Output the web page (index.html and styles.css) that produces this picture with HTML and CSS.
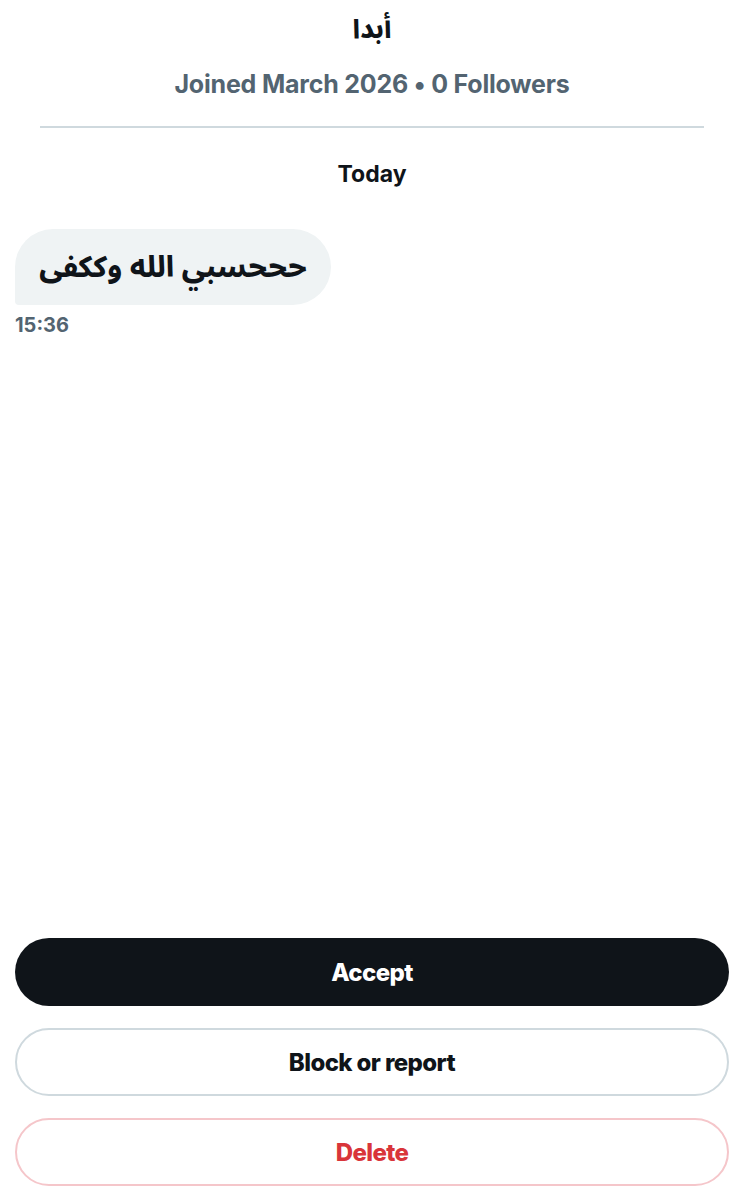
FILE: index.html
```html
<!DOCTYPE html>
<html lang="en">
<head>
<meta charset="utf-8">
<link rel="stylesheet" href="styles.css">
</head>
<body>
<div class="page">
  <header class="profile">
    <div class="name" dir="rtl">أبدا</div>
    <div class="meta">Joined March 2026 • 0 Followers</div>
  </header>
  <hr class="divider">
  <div class="day">Today</div>
  <div class="message">
    <div class="bubble" dir="rtl">حححسبي الله وككفى</div>
    <div class="time">15:36</div>
  </div>
  <div class="spacer"></div>
  <div class="actions">
    <button class="btn btn-accept">Accept</button>
    <button class="btn btn-block">Block or report</button>
    <button class="btn btn-delete">Delete</button>
  </div>
</div>
</body>
</html>
```

FILE: styles.css
```css
* { box-sizing: border-box; }
html, body { margin: 0; padding: 0; background: #fff; }
body {
  font-family: "Inter", "DejaVu Sans", sans-serif;
  color: #0f1419;
}
.page {
  width: 744px;
  height: 1200px;
  display: flex;
  flex-direction: column;
  padding: 0 15px 14px;
}
.profile {
  display: flex;
  flex-direction: column;
  align-items: center;
  padding-top: 12px;
}
.name {
  font-family: "Noto Sans Arabic", "DejaVu Sans", sans-serif;
  font-weight: 800;
  font-size: 26px;
  line-height: 36px;
}
.meta {
  margin-top: 20px;
  font-weight: 700;
  font-size: 25px;
  line-height: 32px;
  color: #536471;
  letter-spacing: -0.2px;
}
.divider {
  border: 0;
  border-top: 2px solid #cfd9de;
  margin: 26px 25px 0;
}
.day {
  text-align: center;
  font-weight: 700;
  font-size: 23px;
  line-height: 30px;
  margin-top: 31px;
}
.message {
  display: flex;
  flex-direction: column;
  align-items: flex-start;
  margin-top: 40px;
}
.bubble {
  background: #eff3f4;
  border-radius: 38px 38px 38px 4px;
  height: 76px;
  width: 316px;
  display: flex;
  align-items: center;
  justify-content: center;
  white-space: nowrap;
  font-family: "Noto Sans Arabic", "DejaVu Sans", sans-serif;
  font-weight: 800;
  font-size: 29px;
}
.time {
  margin-top: 8px;
  font-weight: 700;
  font-size: 20px;
  line-height: 24px;
  color: #536471;
}
.spacer { flex: 1; }
.actions {
  display: flex;
  flex-direction: column;
  gap: 22px;
}
.btn {
  height: 68px;
  border-radius: 34px;
  font-family: "Inter", sans-serif;
  font-weight: 800;
  font-size: 24px;
  letter-spacing: -0.6px;
  cursor: pointer;
  width: 100%;
}
.btn-accept {
  background: #0f1419;
  color: #fff;
  border: 0;
}
.btn-block {
  background: #fff;
  color: #0f1419;
  border: 2px solid #cfd9de;
}
.btn-delete {
  background: #fff;
  color: #d9353a;
  border: 2px solid #f5c6ca;
}
```
